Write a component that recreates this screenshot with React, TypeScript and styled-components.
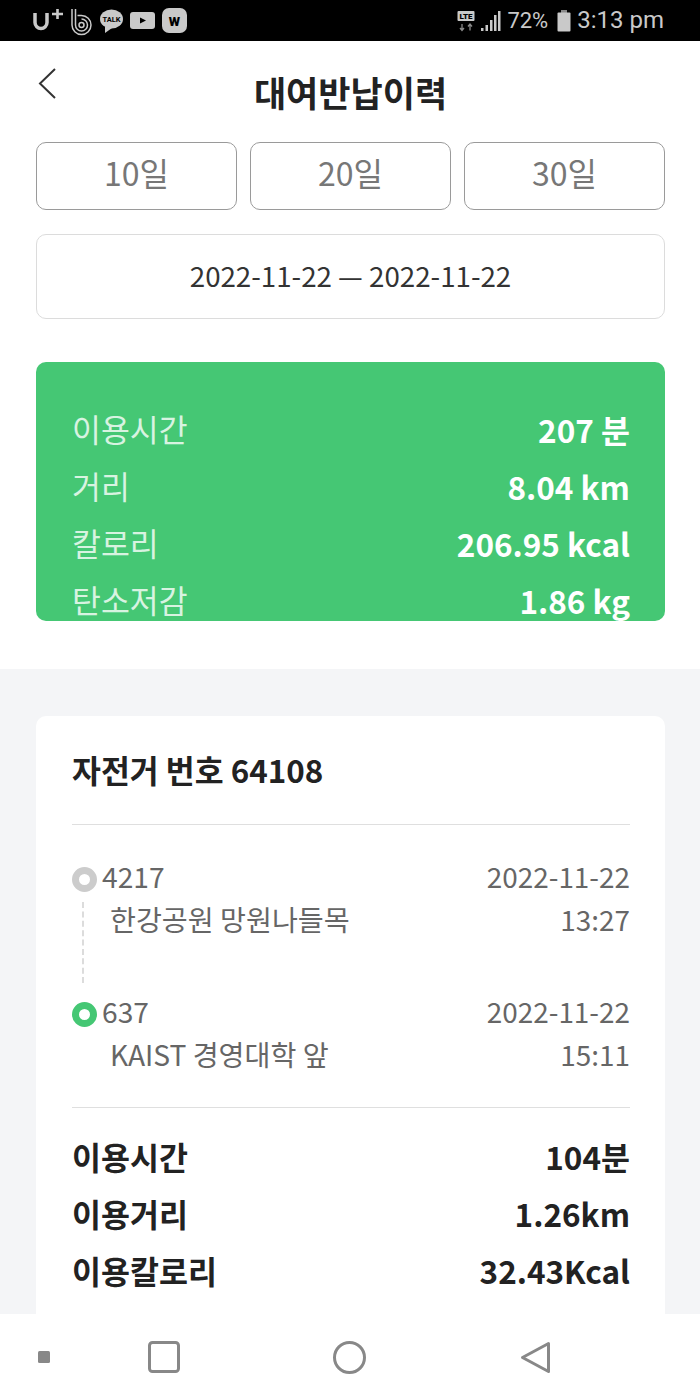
import React from 'react';
import styled, { createGlobalStyle } from 'styled-components';

const GlobalStyle = createGlobalStyle`
  html, body {
    margin: 0;
    padding: 0;
    background: #fff;
    font-family: 'Noto Sans CJK KR', 'Noto Sans', sans-serif;
  }
`;

const Screen = styled.div`
  width: 700px;
  height: 1400px;
  display: flex;
  flex-direction: column;
  overflow: hidden;
`;

const StatusBar = styled.div`
  height: 41px;
  flex: none;
  background: #000;
  color: #c9c9c9;
  display: flex;
  align-items: center;
  justify-content: space-between;
  padding: 0 36px 0 33px;
  box-sizing: border-box;
`;

const StatusGroup = styled.div`
  display: flex;
  align-items: center;
`;

const StatusText = styled.span<{ $gap: number; $size: number }>`
  font-family: Roboto, sans-serif;
  font-size: ${(p) => p.$size}px;
  line-height: 41px;
  margin-left: ${(p) => p.$gap}px;
`;

const Top = styled.div`
  flex: none;
  height: 628px;
  padding: 0 35px 0 36px;
  box-sizing: border-box;
  background: #fff;
`;

const Header = styled.div`
  height: 101px;
  display: flex;
  align-items: center;
  justify-content: center;
  position: relative;
`;

const Title = styled.h1`
  margin: 0;
  font-size: 35px;
  font-weight: 700;
  color: #222;
`;

const BackButton = styled.svg`
  position: absolute;
  left: 0;
  top: 26px;
`;

const Tabs = styled.div`
  display: grid;
  grid-template-columns: repeat(3, 201px);
  column-gap: 13px;
`;

const Tab = styled.div`
  height: 68px;
  padding-bottom: 8px;
  border: 1px solid #9a9a9a;
  border-radius: 10px;
  box-sizing: border-box;
  display: flex;
  align-items: center;
  justify-content: center;
  font-size: 32px;
  color: #777;
`;

const DateRange = styled.div`
  height: 85px;
  margin-top: 24px;
  padding-bottom: 4px;
  border: 1px solid #dcdcdc;
  border-radius: 10px;
  box-sizing: border-box;
  display: flex;
  align-items: center;
  justify-content: center;
  font-size: 27.7px;
  color: #333;
`;

const Summary = styled.div`
  height: 259px;
  margin-top: 43px;
  padding: 38px 35px 0 36px;
  box-sizing: border-box;
  background: #45c774;
  border-radius: 10px;
  overflow: hidden;
  color: #fff;
`;

const SummaryRow = styled.div`
  height: 57px;
  display: flex;
  align-items: center;
  justify-content: space-between;
  white-space: nowrap;
`;

const SummaryLabel = styled.span`
  font-size: 31.4px;
  color: #d8f3e1;
`;

const SummaryValue = styled.span`
  font-size: 31.5px;
  font-weight: 700;
`;

const History = styled.div`
  flex: 1;
  min-height: 0;
  background: #f4f5f7;
  padding: 47px 35px 0 36px;
  overflow: hidden;
`;

const Card = styled.div`
  background: #fff;
  border-radius: 10px 10px 0 0;
  padding: 0 35px 0 36px;
  height: 640px;
`;

const CardTitle = styled.div`
  height: 109px;
  padding-bottom: 2px;
  display: flex;
  align-items: center;
  font-size: 31.4px;
  font-weight: 700;
  color: #222;
  border-bottom: 1px solid #dfdfdf;
  box-sizing: border-box;
`;

const Stops = styled.div`
  height: 283px;
  padding-top: 29px;
  box-sizing: border-box;
  border-bottom: 1px solid #dfdfdf;
  position: relative;
`;

const Stop = styled.div`
  height: 135px;
`;

const StopLine = styled.div`
  height: 43px;
  display: flex;
  align-items: center;
  justify-content: space-between;
  font-size: 28.2px;
  color: #666;
`;

const StopId = styled.div`
  display: flex;
  align-items: center;
  gap: 5px;
`;

const Dot = styled.span<{ $color: string }>`
  width: 25px;
  height: 25px;
  margin-top: 7px;
  border: 7px solid ${(p) => p.$color};
  border-radius: 50%;
  box-sizing: border-box;
`;

const StopName = styled.span`
  margin-left: 38px;
`;

const StopTime = styled.span`
  font-size: 27.9px;
`;

const Dashes = styled.div`
  position: absolute;
  left: 10px;
  top: 77px;
  height: 81px;
  border-left: 2px dashed #dcdcdc;
`;

const Totals = styled.div`
  padding-top: 19px;
`;

const TotalRow = styled.div`
  height: 57px;
  display: flex;
  align-items: center;
  justify-content: space-between;
  font-size: 31.5px;
  font-weight: 700;
  color: #222;
`;

const NavBar = styled.div`
  height: 86px;
  flex: none;
  background: #fff;
  display: flex;
  align-items: center;
  padding-left: 38px;
  box-sizing: border-box;
`;

const NavIcon = styled.svg<{ $gap: number }>`
  display: block;
  margin-left: ${(p) => p.$gap}px;
  fill: none;
  stroke: #888;
  stroke-width: 3;
`;

const AppIcons = () => (
  <svg width="156" height="30" viewBox="0 0 156 30" style={{ display: 'block', marginTop: 1 }}>
    <path d="M2 7v9.500a6 6 0 0 0 12 0V7" fill="none" stroke="#c9c9c9" strokeWidth="3.500" />
    <path d="M24.500 3v10M19 8h11" stroke="#c9c9c9" strokeWidth="2.600" />
    <g fill="none" stroke="#c9c9c9" strokeWidth="1.500">
      <path d="M39 3v16a9.500 9.500 0 1 0 9.500-9.500h-4" />
      <path d="M42.500 3v16a6 6 0 1 0 6-6" />
      <circle cx="48.500" cy="19" r="2.500" />
    </g>
    <ellipse cx="78.500" cy="13" rx="11.500" ry="9.500" fill="#c9c9c9" />
    <path d="M72 20l0 7 7-5z" fill="#c9c9c9" />
    <text x="78.500" y="15.500" fontSize="7.500" fontWeight="700" textAnchor="middle" fill="#000" fontFamily="Roboto, sans-serif">TALK</text>
    <rect x="97" y="6" width="25" height="17" rx="3" fill="#c9c9c9" />
    <path d="M107 11.500l6 3-6 3z" fill="#000" />
    <rect x="129" y="2" width="25" height="25" rx="7" fill="#c9c9c9" />
    <text x="141.500" y="19.500" fontSize="13" fontWeight="900" textAnchor="middle" fill="#000" fontFamily="Roboto, sans-serif">W</text>
  </svg>
);

const LteIcon = () => (
  <svg width="18" height="22" viewBox="0 0 18 22" style={{ display: 'block', marginRight: 6 }}>
    <rect x="0.500" y="1" width="17" height="10" rx="1" fill="#c9c9c9" />
    <text x="9" y="9" fontSize="8" fontWeight="900" textAnchor="middle" fill="#000" fontFamily="Roboto, sans-serif">LTE</text>
    <path d="M5 14v6M3 18l2 2.500 2-2.500M13 20.500v-6M11 16.500l2-2.500 2 2.500" fill="none" stroke="#8a8a8a" strokeWidth="1.300" />
  </svg>
);

const SignalIcon = () => (
  <svg width="20" height="20" viewBox="0 0 20 20" style={{ display: 'block' }}>
    <g fill="#c9c9c9">
      <rect x="0" y="17" width="2.500" height="3" />
      <rect x="4.500" y="14" width="2.500" height="6" />
      <rect x="9" y="9" width="2.500" height="11" />
      <rect x="13" y="4" width="2.500" height="16" />
      <rect x="17" y="0" width="2.500" height="20" />
    </g>
  </svg>
);

const BatteryIcon = () => (
  <svg width="14" height="22" viewBox="0 0 14 22" style={{ display: 'block' }}>
    <rect x="4" y="0" width="6" height="3" fill="#8a8a8a" />
    <rect x="0.500" y="2.500" width="13" height="19" rx="1" fill="#c9c9c9" />
  </svg>
);

const summary = [
  ['이용시간', '207 분'],
  ['거리', '8.04 km'],
  ['칼로리', '206.95 kcal'],
  ['탄소저감', '1.86 kg'],
];

const totals = [
  ['이용시간', '104분'],
  ['이용거리', '1.26km'],
  ['이용칼로리', '32.43Kcal'],
];

export default function App() {
  return (
    <Screen>
      <GlobalStyle />
      <StatusBar>
        <AppIcons />
        <StatusGroup>
          <LteIcon />
          <SignalIcon />
          <StatusText $gap={6} $size={22}>72%</StatusText>
          <StatusGroup style={{ marginLeft: 9 }}>
            <BatteryIcon />
          </StatusGroup>
          <StatusText $gap={6} $size={24}>3:13 pm</StatusText>
        </StatusGroup>
      </StatusBar>
      <Top>
        <Header>
          <BackButton width="22" height="34" viewBox="0 0 22 34" fill="none" stroke="#333" strokeWidth="2">
            <path d="M19 2L4 16.500 19 31" />
          </BackButton>
          <Title>대여반납이력</Title>
        </Header>
        <Tabs>
          <Tab>10일</Tab>
          <Tab>20일</Tab>
          <Tab>30일</Tab>
        </Tabs>
        <DateRange>2022-11-22 — 2022-11-22</DateRange>
        <Summary>
          {summary.map(([label, value]) => (
            <SummaryRow key={label}>
              <SummaryLabel>{label}</SummaryLabel>
              <SummaryValue>{value}</SummaryValue>
            </SummaryRow>
          ))}
        </Summary>
      </Top>
      <History>
        <Card>
          <CardTitle>자전거 번호 64108</CardTitle>
          <Stops>
            <Dashes />
            <Stop>
              <StopLine>
                <StopId>
                  <Dot $color="#cccccc" />
                  4217
                </StopId>
                <StopTime>2022-11-22</StopTime>
              </StopLine>
              <StopLine>
                <StopName>한강공원 망원나들목</StopName>
                <StopTime>13:27</StopTime>
              </StopLine>
            </Stop>
            <Stop>
              <StopLine>
                <StopId>
                  <Dot $color="#45c774" />
                  637
                </StopId>
                <StopTime>2022-11-22</StopTime>
              </StopLine>
              <StopLine>
                <StopName>KAIST 경영대학 앞</StopName>
                <StopTime>15:11</StopTime>
              </StopLine>
            </Stop>
          </Stops>
          <Totals>
            {totals.map(([label, value]) => (
              <TotalRow key={label}>
                <span>{label}</span>
                <span>{value}</span>
              </TotalRow>
            ))}
          </Totals>
        </Card>
      </History>
      <NavBar>
        <NavIcon $gap={0} width="12" height="12" viewBox="0 0 12 12">
          <rect x="0" y="0" width="12" height="12" rx="1.500" fill="#888" stroke="none" />
        </NavIcon>
        <NavIcon $gap={98} width="32" height="32" viewBox="0 0 32 32">
          <rect x="1.500" y="1.500" width="29" height="29" rx="3" />
        </NavIcon>
        <NavIcon $gap={153} width="33" height="33" viewBox="0 0 33 33">
          <circle cx="16.500" cy="16.500" r="15" />
        </NavIcon>
        <NavIcon $gap={154} width="31" height="33" viewBox="0 0 31 33">
          <path d="M28.500 2.500L2.500 16.500 28.500 30.500z" strokeLinejoin="round" />
        </NavIcon>
      </NavBar>
    </Screen>
  );
}
